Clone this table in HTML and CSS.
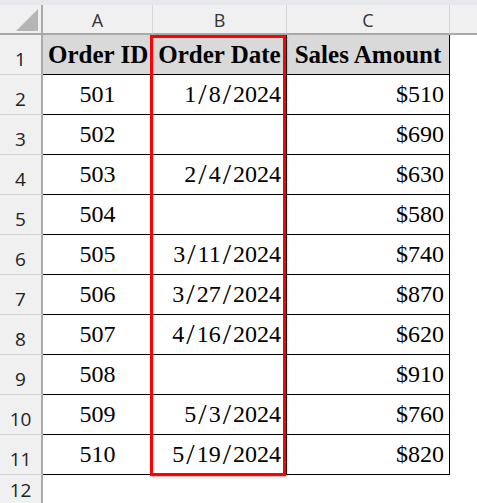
FILE: index.html
```html
<!DOCTYPE html>
<html>
<head>
<meta charset="utf-8">
<link rel="stylesheet" href="styles.css">
</head>
<body>
<div class="topband"></div>
<div class="sheet">
  <div class="corner"><svg class="tri" width="23" height="23" viewBox="0 0 23 23"><polygon points="22,0 22,22 0,22" fill="#b5b5b5"/></svg></div>
  <div class="colhead">A</div>
  <div class="colhead">B</div>
  <div class="colhead">C</div>
  <div class="colhead last"></div>

  <div class="rowhead">1</div>
  <div class="cell hdr">Order ID</div>
  <div class="cell hdr hl-anchor">Order Date<div class="highlight"></div></div>
  <div class="cell hdr">Sales Amount</div>
  <div class="blank"></div>

  <div class="rowhead">2</div><div class="cell c">501</div><div class="cell r">1<span class="sl">/</span>8<span class="sl">/</span>2024</div><div class="cell r">$510</div><div class="blank"></div>
  <div class="rowhead">3</div><div class="cell c">502</div><div class="cell r"></div><div class="cell r">$690</div><div class="blank"></div>
  <div class="rowhead">4</div><div class="cell c">503</div><div class="cell r">2<span class="sl">/</span>4<span class="sl">/</span>2024</div><div class="cell r">$630</div><div class="blank"></div>
  <div class="rowhead">5</div><div class="cell c">504</div><div class="cell r"></div><div class="cell r">$580</div><div class="blank"></div>
  <div class="rowhead">6</div><div class="cell c">505</div><div class="cell r">3<span class="sl">/</span>11<span class="sl">/</span>2024</div><div class="cell r">$740</div><div class="blank"></div>
  <div class="rowhead">7</div><div class="cell c">506</div><div class="cell r">3<span class="sl">/</span>27<span class="sl">/</span>2024</div><div class="cell r">$870</div><div class="blank"></div>
  <div class="rowhead">8</div><div class="cell c">507</div><div class="cell r">4<span class="sl">/</span>16<span class="sl">/</span>2024</div><div class="cell r">$620</div><div class="blank"></div>
  <div class="rowhead">9</div><div class="cell c">508</div><div class="cell r"></div><div class="cell r">$910</div><div class="blank"></div>
  <div class="rowhead">10</div><div class="cell c">509</div><div class="cell r">5<span class="sl">/</span>3<span class="sl">/</span>2024</div><div class="cell r">$760</div><div class="blank"></div>
  <div class="rowhead">11</div><div class="cell c">510</div><div class="cell r">5<span class="sl">/</span>19<span class="sl">/</span>2024</div><div class="cell r">$820</div><div class="blank"></div>
  <div class="rowhead last">12</div><div class="blank"></div><div class="blank"></div><div class="blank"></div><div class="blank"></div>
</div>
</body>
</html>
```
FILE: styles.css
```css
* { box-sizing: border-box; }
html, body { margin: 0; padding: 0; background: #fff; }
body { width: 477px; height: 503px; overflow: hidden; }

.topband { height: 5px; background: #e6e8eb; }

.sheet {
  display: grid;
  grid-template-columns: 43px 110px 134px 163px 1fr;
  grid-template-rows: 30px repeat(11, 40px) 28px;
}

.corner {
  background: #f0f0f0;
  border-bottom: 2px solid #a9a9a9;
  border-right: 2px solid #a9a9a9;
  display: flex;
  align-items: flex-end;
  justify-content: flex-end;
  padding: 0 2px 1px 0;
}
.tri { display: block; }

.colhead {
  background: #f0f0f0;
  border-bottom: 2px solid #a9a9a9;
  border-right: 1px solid #d4d4d4;
  font-family: "Open Sans", "Noto Sans", sans-serif;
  font-size: 18px;
  color: #333;
  display: flex;
  align-items: center;
  justify-content: center;
  padding-top: 1px;
}
.colhead.last { border-right: none; }

.rowhead {
  background: #f0f0f0;
  border-right: 2px solid #ababab;
  border-bottom: 1px solid #d4d4d4;
  font-family: "Open Sans", "Noto Sans", sans-serif;
  font-size: 19px;
  color: #222;
  display: flex;
  align-items: flex-end;
  justify-content: center;
  padding-bottom: 5px;
  line-height: 1;
}
.rowhead.last { border-bottom: none; padding-bottom: 3px; }

.cell {
  border-right: 1px solid #000;
  border-bottom: 1px solid #000;
  font-family: "Liberation Serif", "Times New Roman", serif;
  font-size: 24px;
  color: #000;
  line-height: 39px;
  padding: 0 5px;
  white-space: nowrap;
}
.cell.c { text-align: center; }
.cell.r { text-align: right; }
.sl { font-size: 30px; line-height: 0; padding: 0 2px; position: relative; top: 2px; }

.cell.hdr {
  background: #d9d9d9;
  font-weight: bold;
  font-size: 25px;
  text-align: center;
}

.hl-anchor { position: relative; }
.highlight {
  position: absolute;
  left: -3px;
  top: 0;
  width: 136px;
  height: 441px;
  border: 3px solid #ff0000;
  box-shadow: 1px 1px 2px rgba(0, 0, 0, 0.35);
  z-index: 2;
  pointer-events: none;
}

.blank { background: #fff; }
```
